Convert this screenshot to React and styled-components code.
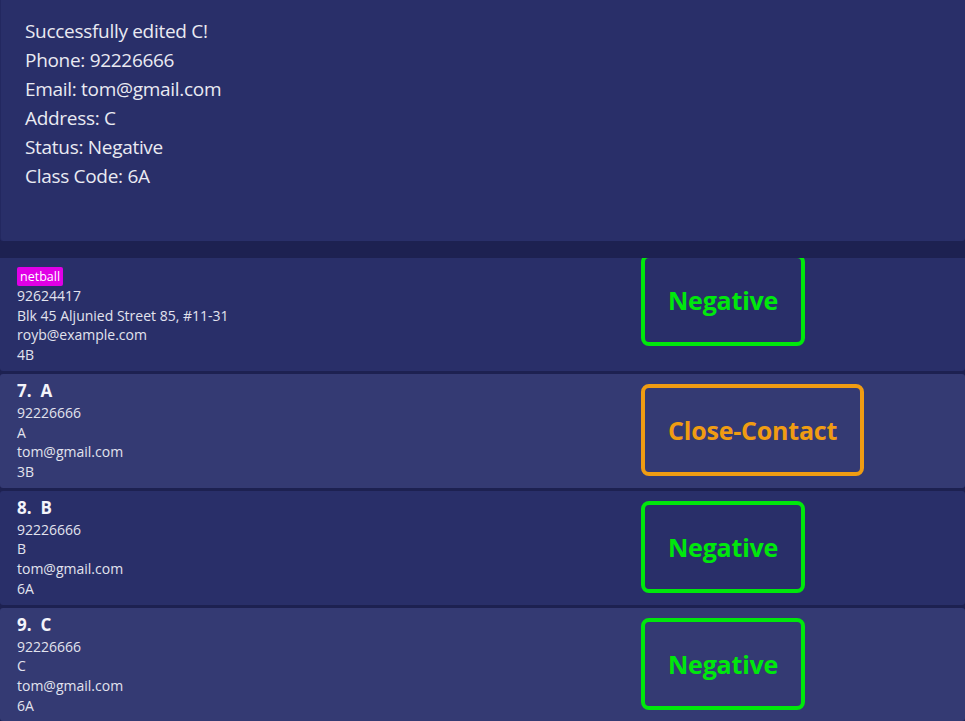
import { useEffect, useRef } from "react";
import styled, { createGlobalStyle } from "styled-components";

const people = [
  { name: "Alex Yeoh", tags: ["friends"], phone: "87438807", address: "Blk 30 Geylang Street 29, #06-40", email: "alexyeoh@example.com", classCode: "4A", status: "Negative" },
  { name: "Bernice Yu", tags: ["colleagues", "friends"], phone: "99272758", address: "Blk 30 Lorong 3 Serangoon Gardens, #07-18", email: "berniceyu@example.com", classCode: "4A", status: "Negative" },
  { name: "Charlotte Oliveiro", tags: ["neighbours"], phone: "93210283", address: "Blk 11 Ang Mo Kio Street 74, #11-04", email: "charlotte@example.com", classCode: "4B", status: "Negative" },
  { name: "David Li", tags: ["family"], phone: "91031282", address: "Blk 436 Serangoon Gardens Street 26, #16-43", email: "lidavid@example.com", classCode: "4B", status: "Negative" },
  { name: "Irfan Ibrahim", tags: ["classmates"], phone: "92492021", address: "Blk 47 Tampines Street 20, #17-35", email: "irfan@example.com", classCode: "4B", status: "Negative" },
  { name: "Roy Balakrishnan", tags: ["netball"], phone: "92624417", address: "Blk 45 Aljunied Street 85, #11-31", email: "royb@example.com", classCode: "4B", status: "Negative" },
  { name: "A", tags: [], phone: "92226666", address: "A", email: "tom@gmail.com", classCode: "3B", status: "Close-Contact" },
  { name: "B", tags: [], phone: "92226666", address: "B", email: "tom@gmail.com", classCode: "6A", status: "Negative" },
  { name: "C", tags: [], phone: "92226666", address: "C", email: "tom@gmail.com", classCode: "6A", status: "Negative" },
];

const resultLines = [
  "Successfully edited C!",
  "Phone: 92226666",
  "Email: tom@gmail.com",
  "Address: C",
  "Status: Negative",
  "Class Code: 6A",
];

const statusColors = {
  Negative: "#00e80c",
  "Close-Contact": "#f09c12",
};

function App() {
  const listRef = useRef(null);

  useEffect(() => {
    const list = listRef.current;
    if (list) list.scrollTop = list.scrollHeight;
  }, []);

  return (
    <>
      <GlobalStyle />
      <Window>
        <ResultPanel>
          {resultLines.map((line) => (
            <ResultLine key={line}>{line}</ResultLine>
          ))}
        </ResultPanel>
        <Divider />
        <PersonList ref={listRef}>
          {people.map((p, i) => (
            <Card key={p.name} light={i % 2 === 0}>
              <Details>
                <Name>
                  {i + 1}.&nbsp;&nbsp;{p.name}
                </Name>
                {p.tags.length > 0 && (
                  <Tags>
                    {p.tags.map((t) => (
                      <Tag key={t}>{t}</Tag>
                    ))}
                  </Tags>
                )}
                <Field>{p.phone}</Field>
                <Field>{p.address}</Field>
                <Field>{p.email}</Field>
                <Field>{p.classCode}</Field>
              </Details>
              <Status color={statusColors[p.status]}>{p.status}</Status>
            </Card>
          ))}
        </PersonList>
      </Window>
    </>
  );
}

const GlobalStyle = createGlobalStyle`
  html, body {
    margin: 0;
    padding: 0;
    background: #1d2151;
  }
  body {
    font-family: "Open Sans", "Noto Sans", sans-serif;
  }
`;

const Window = styled.div`
  height: 100vh;
  display: flex;
  flex-direction: column;
  overflow: hidden;
  background: #1d2151;
`;

const ResultPanel = styled.div`
  height: 241px;
  box-sizing: border-box;
  padding: 17px 24px;
  background: #292f69;
  border-left: 1px solid #232860;
  border-radius: 0 0 3px 3px;
  color: #e9eaf2;
`;

const ResultLine = styled.div`
  font-size: 19px;
  line-height: 29px;
  letter-spacing: -0.3px;
`;

const Divider = styled.div`
  height: 17px;
  flex-shrink: 0;
`;

const PersonList = styled.div`
  flex: 1;
  min-height: 0;
  overflow-y: auto;
  scrollbar-width: none;
  &::-webkit-scrollbar {
    display: none;
  }
`;

const Card = styled.div`
  display: flex;
  align-items: center;
  padding: 5px 17px 6px;
  margin-bottom: 3px;
  border-radius: 3px;
  background: ${(p) => (p.light ? "#343a73" : "#292f69")};
  &:last-child {
    margin-bottom: 0;
  }
`;

const Details = styled.div`
  width: 624px;
  flex-shrink: 0;
  color: #e2e3ee;
`;

const Name = styled.div`
  font-size: 17px;
  font-weight: 700;
  line-height: 24px;
  color: #f4f4fa;
`;

const Tags = styled.div`
  display: flex;
  gap: 4px;
  margin-top: 7px;
`;

const Tag = styled.span`
  display: block;
  height: 19px;
  background: #e000e6;
  color: #ffffff;
  font-size: 12.5px;
  line-height: 19px;
  padding: 0 3px;
  border-radius: 2px;
`;

const Field = styled.div`
  font-size: 14px;
  line-height: 19.7px;
`;

const Status = styled.div`
  height: 92px;
  box-sizing: border-box;
  display: flex;
  align-items: center;
  padding: 0 23px;
  border: 4px solid ${(p) => p.color};
  border-radius: 8px;
  color: ${(p) => p.color};
  font-size: 25px;
  font-weight: 700;
  letter-spacing: -0.2px;
  white-space: nowrap;
`;

export default App;
